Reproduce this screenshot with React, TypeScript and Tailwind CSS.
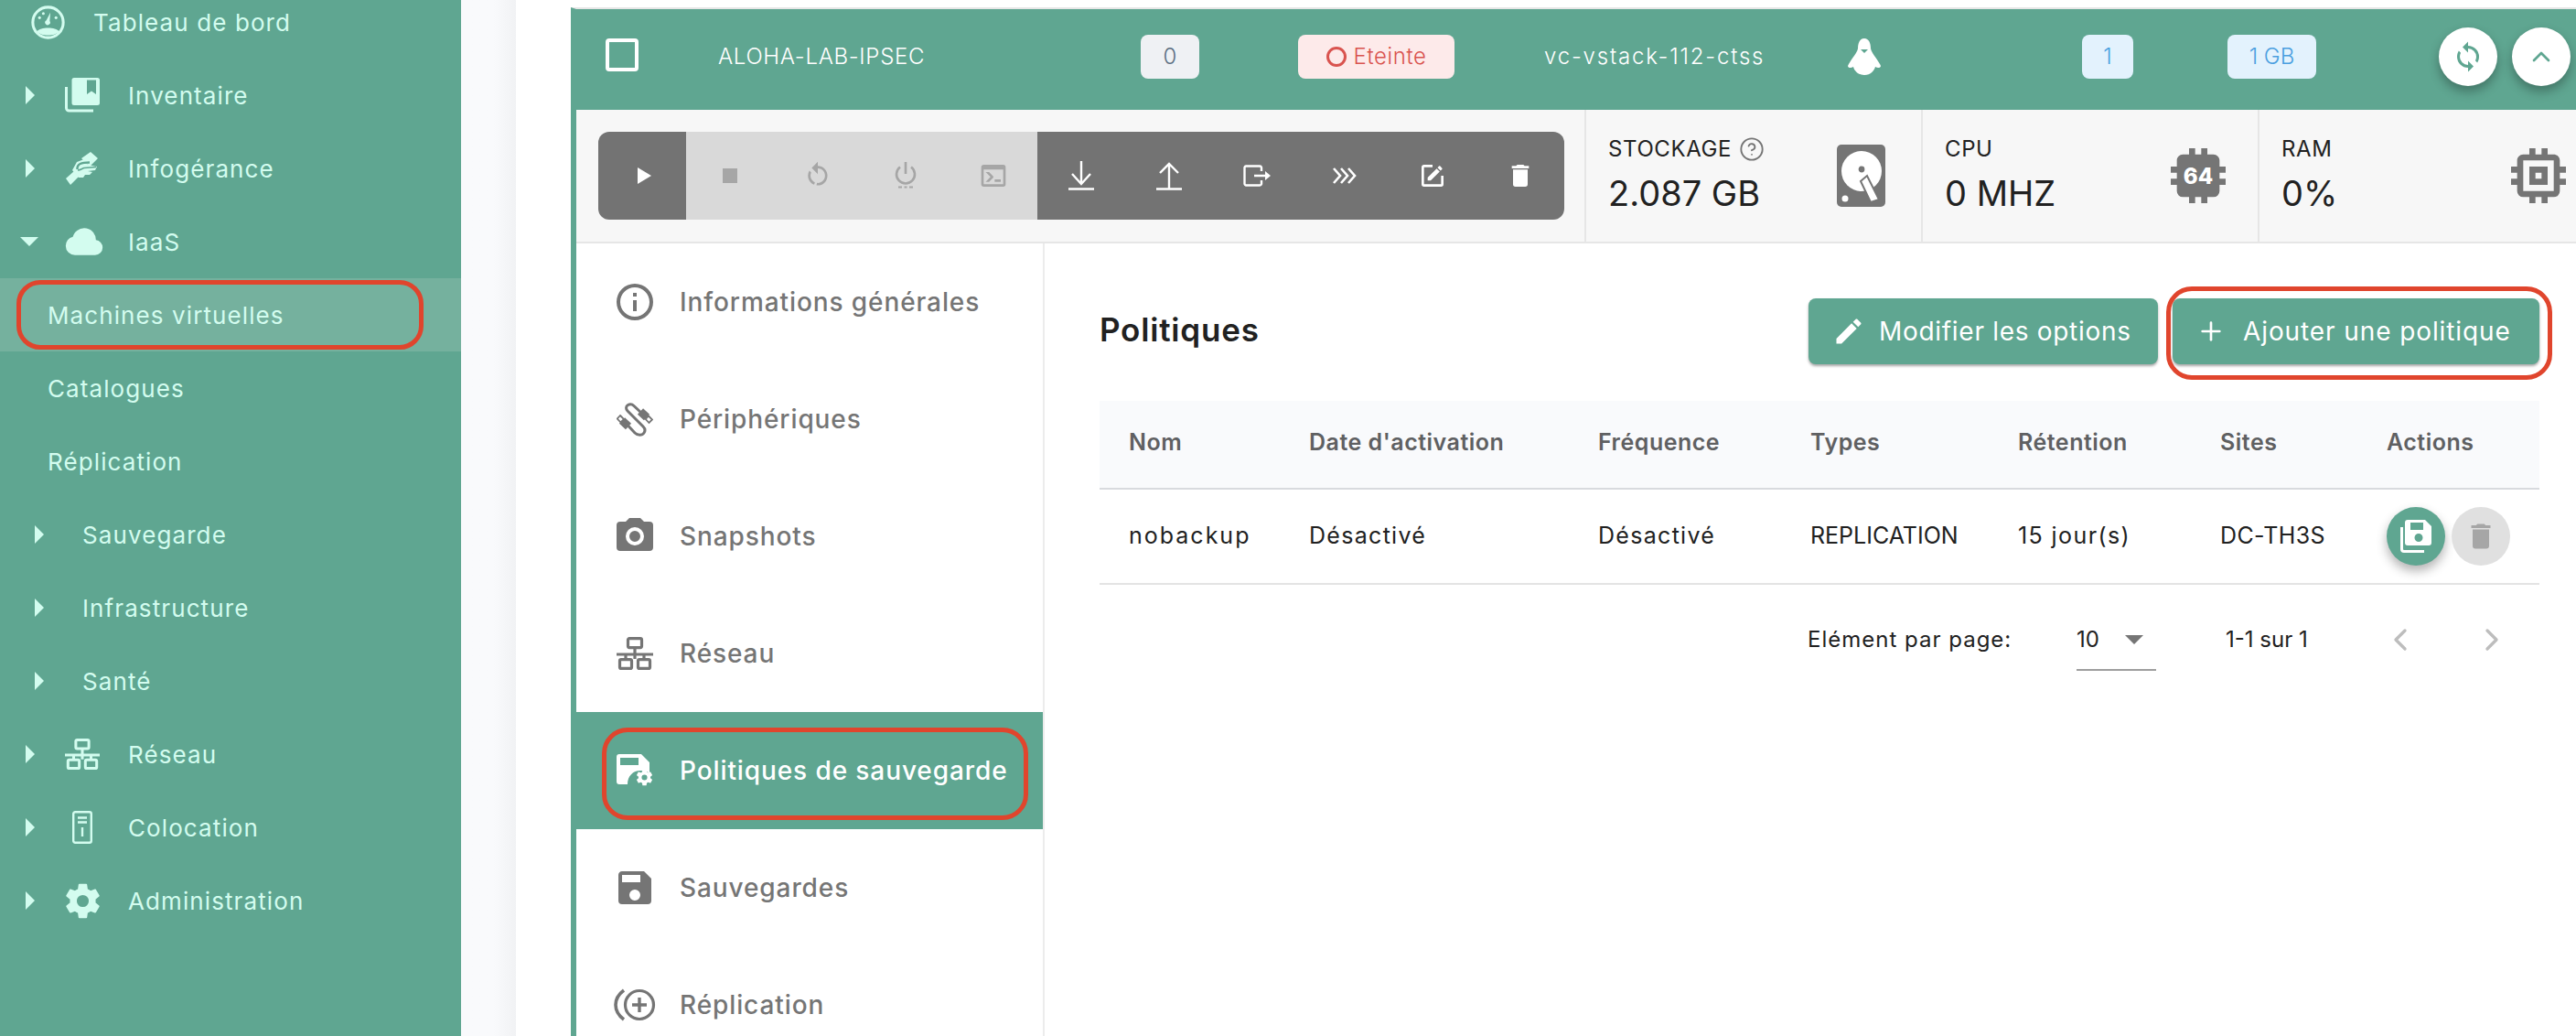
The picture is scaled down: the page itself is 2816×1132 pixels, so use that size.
import { ChevronLeft, ChevronRight, ChevronUp, CircleHelp, Plus } from 'lucide-react';
import type { ReactNode } from 'react';

const P = {
  save: 'M15,9H5V5H15M12,19A3,3 0 0,1 9,16A3,3 0 0,1 12,13A3,3 0 0,1 15,16A3,3 0 0,1 12,19M17,3H5C3.89,3 3,3.9 3,5V19A2,2 0 0,0 5,21H19A2,2 0 0,0 21,19V7L17,3Z',
  cog: 'M12,15.5A3.5,3.5 0 0,1 8.5,12A3.5,3.5 0 0,1 12,8.5A3.5,3.5 0 0,1 15.5,12A3.5,3.5 0 0,1 12,15.5M19.43,12.97C19.47,12.65 19.5,12.33 19.5,12C19.5,11.67 19.47,11.34 19.43,11L21.54,9.37C21.73,9.22 21.78,8.95 21.66,8.73L19.66,5.27C19.54,5.05 19.27,4.96 19.05,5.05L16.56,6.05C16.04,5.66 15.5,5.32 14.87,5.07L14.5,2.42C14.46,2.18 14.25,2 14,2H10C9.75,2 9.54,2.18 9.5,2.42L9.13,5.07C8.5,5.32 7.96,5.66 7.44,6.05L4.95,5.05C4.73,4.96 4.46,5.05 4.34,5.27L2.34,8.73C2.21,8.95 2.27,9.22 2.46,9.37L4.57,11C4.53,11.34 4.5,11.67 4.5,12C4.5,12.33 4.53,12.65 4.57,12.97L2.46,14.63C2.27,14.78 2.21,15.05 2.34,15.27L4.34,18.73C4.46,18.95 4.73,19.03 4.95,18.95L7.44,17.94C7.96,18.34 8.5,18.68 9.13,18.93L9.5,21.58C9.54,21.82 9.75,22 10,22H14C14.25,22 14.46,21.82 14.5,21.58L14.87,18.93C15.5,18.67 16.04,18.34 16.56,17.94L19.05,18.95C19.27,19.03 19.54,18.95 19.66,18.73L21.66,15.27C21.78,15.05 21.73,14.78 21.54,14.63L19.43,12.97Z',
  camera: 'M4,4H7L9,2H15L17,4H20A2,2 0 0,1 22,6V18A2,2 0 0,1 20,20H4A2,2 0 0,1 2,18V6A2,2 0 0,1 4,4M12,7A5,5 0 0,0 7,12A5,5 0 0,0 12,17A5,5 0 0,0 17,12A5,5 0 0,0 12,7M12,9A3,3 0 0,1 15,12A3,3 0 0,1 12,15A3,3 0 0,1 9,12A3,3 0 0,1 12,9Z',
  cloud: 'M6.5 20Q4.22 20 2.61 18.43 1 16.85 1 14.58 1 12.63 2.17 11.1 3.35 9.57 5.25 9.15 5.88 6.85 7.75 5.43 9.63 4 12 4 14.93 4 16.96 6.04 19 8.07 19 11 20.73 11.2 21.86 12.5 23 13.78 23 15.5 23 17.38 21.69 18.69 20.38 20 18.5 20Z',
  pencil: 'M20.71,7.04C21.1,6.65 21.1,6 20.71,5.63L18.37,3.29C18,2.9 17.35,2.9 16.96,3.29L15.12,5.12L18.87,8.87M3,17.25V21H6.75L17.81,9.93L14.06,6.18L3,17.25Z',
  trash: 'M19,4H15.5L14.5,3H9.5L8.5,4H5V6H19M6,19A2,2 0 0,0 8,21H16A2,2 0 0,0 18,19V7H6V19Z',
  sync: 'M12,18A6,6 0 0,1 6,12C6,11 6.25,10.03 6.7,9.2L5.24,7.74C4.46,8.97 4,10.43 4,12A8,8 0 0,0 12,20V23L16,19L12,15M12,4V1L8,5L12,9V6A6,6 0 0,1 18,12C18,13 17.75,13.97 17.3,14.8L18.76,16.26C19.54,15.03 20,13.57 20,12A8,8 0 0,0 12,4Z',
  restart: 'M12,4C14.1,4 16.1,4.8 17.6,6.3C20.7,9.4 20.7,14.5 17.6,17.6C15.8,19.5 13.3,20.2 10.9,19.9L11.4,17.9C13.1,18.1 14.9,17.5 16.2,16.2C18.5,13.9 18.5,10.1 16.2,7.7C15.1,6.6 13.5,6 12,6V10.6L7,5.6L12,0.6V4M6.3,17.6C3.7,15 3.3,11 5.1,7.9L6.6,9.4C5.5,11.6 5.9,14.4 7.8,16.2C8.3,16.7 8.9,17.1 9.6,17.4L9,19.4C8,19 7.1,18.4 6.3,17.6Z',
  console: 'M20,19V7H4V19H20M20,3A2,2 0 0,1 22,5V19A2,2 0 0,1 20,21H4A2,2 0 0,1 2,19V5C2,3.89 2.9,3 4,3H20M13,17V15H18V17H13M9.58,13L5.57,9H8.4L11.7,12.3C12.09,12.69 12.09,13.33 11.7,13.72L8.42,17H5.59L9.58,13Z',
  info: 'M11,9H13V7H11M12,20C7.59,20 4,16.41 4,12C4,7.59 7.59,4 12,4C16.41,4 20,7.59 20,12C20,16.41 16.41,20 12,20M12,2A10,10 0 0,0 2,12A10,10 0 0,0 12,22A10,10 0 0,0 22,12A10,10 0 0,0 12,2M11,17H13V11H11V17Z',
  edit: 'M5,3C3.89,3 3,3.89 3,5V19A2,2 0 0,0 5,21H19A2,2 0 0,0 21,19V12H19V19H5V5H12V3H5M17.78,4C17.61,4 17.43,4.07 17.3,4.2L16.08,5.41L18.58,7.91L19.8,6.7C20.06,6.44 20.06,6 19.8,5.75L18.25,4.2C18.12,4.07 17.95,4 17.78,4M15.37,6.12L8,13.5V16H10.5L17.87,8.62L15.37,6.12Z',
  memory: 'M17,17H7V7H17M21,11V9H19V7C19,5.89 18.1,5 17,5H15V3H13V5H11V3H9V5H7C5.89,5 5,5.89 5,7V9H3V11H5V13H3V15H5V17A2,2 0 0,0 7,19H9V21H11V19H13V21H15V19H17A2,2 0 0,0 19,17V15H21V13H19V11M13,13H11V11H13M15,9H9V15H15V9Z',
  chipBody: 'M21,11V9H19V7C19,5.89 18.1,5 17,5H15V3H13V5H11V3H9V5H7C5.89,5 5,5.89 5,7V9H3V11H5V13H3V15H5V17A2,2 0 0,0 7,19H9V21H11V19H13V21H15V19H17A2,2 0 0,0 19,17V15H21V13H19V11Z',
};

function Mdi({ d, className }: { d: string; className?: string }) {
  return (
    <svg viewBox="0 0 24 24" className={className} fill="currentColor">
      <path d={d} />
    </svg>
  );
}

function Gauge() {
  return (
    <svg viewBox="0 0 36 36" className="w-[37px] h-[37px]">
      <circle cx="18" cy="18" r="16.2" fill="none" stroke="currentColor" strokeWidth="3" />
      <path d="M6 27.5 C10 22.5 26 22.5 30 27.5 C26 33 10 33 6 27.5Z" fill="currentColor" />
      <path d="M20.5 7.5 L19.8 16.5 A2.7 2.7 0 1 1 16.2 15.7Z" fill="currentColor" />
      <circle cx="9" cy="13" r="1.5" fill="currentColor" />
      <circle cx="13" cy="8.5" r="1.5" fill="currentColor" />
      <circle cx="26.5" cy="13" r="1.5" fill="currentColor" />
    </svg>
  );
}

function BookStack() {
  return (
    <svg viewBox="0 0 38 38" className="w-[38px] h-[38px]">
      <path
        fillRule="evenodd"
        d="M10 0H35.5A2.5 2.5 0 0 1 38 2.5V27.5A2.5 2.5 0 0 1 35.5 30H10A2.5 2.5 0 0 1 7.5 27.5V2.5A2.5 2.5 0 0 1 10 0ZM24 2.5V18L29 14.5L34 18V2.5Z"
        fill="currentColor"
      />
      <path d="M1.5 10V33A3 3 0 0 0 4.5 36H31" fill="none" stroke="currentColor" strokeWidth="3" />
    </svg>
  );
}

function Handshake() {
  return (
    <svg viewBox="0 0 36 36" className="w-[36px] h-[36px]">
      <path d="M17 7L27 0L35 7L26 16Z M0 29L9 21L14 27L5 36Z" fill="currentColor" />
      <path
        d="M7 20L12 11L20 8L24 14L34 16L32 20L24 21L29 22L26 25L21 25L19 28L14 28Z"
        fill="currentColor"
      />
      <path d="M12.5 19C12 13 17 11.5 26 11.5" fill="none" stroke="#5fa691" strokeWidth="2.4" />
      <path d="M13 20C16 20 18 18 20 17.5L33 16.5" fill="none" stroke="#5fa691" strokeWidth="1.6" />
    </svg>
  );
}

function Network({ className }: { className?: string }) {
  return (
    <svg viewBox="0 0 40 36" className={className}>
      <g fill="none" stroke="currentColor" strokeWidth="3.2">
        <rect x="12.5" y="1.6" width="15" height="10" rx="1.5" />
        <rect x="3.5" y="24.6" width="13" height="9.8" rx="1.5" />
        <rect x="23.5" y="24.6" width="13" height="9.8" rx="1.5" />
        <path d="M20 12V24M0 19H40M10 19V24M30 19V24" />
      </g>
    </svg>
  );
}

function ServerRack() {
  return (
    <svg viewBox="0 0 22 36" className="w-[22px] h-[36px]">
      <rect x="1.2" y="1.2" width="19.6" height="33.6" rx="2" fill="none" stroke="currentColor" strokeWidth="2.4" />
      <path d="M6 7.5H16M6 12.5H16M11 18V28" fill="none" stroke="currentColor" strokeWidth="2.4" />
    </svg>
  );
}

function Usb() {
  return (
    <svg viewBox="0 0 40 37" className="w-[40px] h-[37px] text-[#757575]">
      <path
        d="M12.5 25L20 33C23 36 28 36 30 33C32 30 31 28 29 26L12 9C10 7 10 4 12.5 2.5C15 1 17 1.5 19 3.5L27 11"
        fill="none"
        stroke="currentColor"
        strokeWidth="3"
      />
      <path d="M6 19.5L13 26M26 9.5L33 16" fill="none" stroke="currentColor" strokeWidth="9" />
      <path d="M4 14L8 18L4.5 21.5L0.8 17.5Z M35 14.5L39 18.5L35.5 22L31.8 18Z" fill="#fff" stroke="currentColor" strokeWidth="1.8" />
    </svg>
  );
}

function SaveCog() {
  return (
    <svg viewBox="0 0 40 38" className="w-[40px] h-[38px] text-white">
      <path d="M27 1H3A3 3 0 0 0 0 4V31A3 3 0 0 0 3 34H12C12 25 18 19 26 19C30 19 34 20 36 22V10Z" fill="currentColor" />
      <rect x="4" y="5" width="20" height="8" fill="#5fa691" />
      <svg x="20" y="16" width="21" height="21" viewBox="0 0 24 24">
        <path d={P.cog} fill="currentColor" />
      </svg>
    </svg>
  );
}

function ReplicationIcon() {
  return (
    <svg viewBox="0 0 48 38" className="w-[50px] h-[38px] text-[#757575]">
      <path d="M12 3 C0 12 0 26 12 35" fill="none" stroke="currentColor" strokeWidth="3.6" />
      <circle cx="29" cy="19" r="15.5" fill="none" stroke="currentColor" strokeWidth="3.2" />
      <path d="M29 11V27M21 19H37" fill="none" stroke="currentColor" strokeWidth="3.4" />
    </svg>
  );
}

function Penguin() {
  return (
    <svg viewBox="0 0 42 40" className="w-[42px] h-[40px]">
      <path
        d="M21 0C26 0 28 5 28 11C29 16 34 21 38 28C41 32 36 33 33 31C32 35 28 40 21 40C14 40 10 35 9 31C6 33 1 32 4 28C8 21 13 16 14 11C14 5 16 0 21 0Z"
        fill="#fff"
      />
      <path d="M17 12H25L21 16Z" fill="#5fa691" />
    </svg>
  );
}

function Hdd() {
  return (
    <svg viewBox="0 0 53 68" className="w-[53px] h-[68px]">
      <rect width="53" height="68" rx="5" fill="#757575" />
      <circle cx="27" cy="29" r="22" fill="#fff" />
      <circle cx="27" cy="27" r="3.4" fill="#757575" />
      <path d="M26 40 L33 34 L46 60 L37 63Z" fill="#fff" stroke="#757575" strokeWidth="2" />
      <circle cx="9" cy="59" r="3.5" fill="#fff" />
    </svg>
  );
}

function Chip({ filled }: { filled?: boolean }) {
  return (
    <svg viewBox="3 3 18 18" className="w-[62px] h-[60px] text-[#757575]">
      <path d={filled ? P.chipBody : P.memory} fill="currentColor" />
      {filled && (
        <text x="12" y="14.6" textAnchor="middle" fontSize="7.2" fontWeight="800" fill="#fff" fontFamily="Inter, sans-serif">
          64
        </text>
      )}
    </svg>
  );
}

function Power() {
  return (
    <svg viewBox="0 0 24 32" className="w-[24px] h-[32px] text-[#a6a6a6]">
      <g fill="none" stroke="currentColor" strokeWidth="2.6">
        <path d="M12 1V14" />
        <path d="M6 6.5A10 10 0 1 0 18 6.5" />
        <path d="M4 28.5H8M10.5 28.5H13.5M16 28.5H20" strokeWidth="2" />
      </g>
    </svg>
  );
}

function Ring({ className }: { className: string }) {
  return <span className={`absolute pointer-events-none border-[5px] border-[#e0452d] ${className}`} />;
}

const Caret = () => <span className="w-0 h-0 border-y-[10px] border-y-transparent border-l-[10px] border-l-[#d3fcef]" />;

type SideItem = { label: string; icon?: ReactNode };

const sideItems: SideItem[] = [
  { label: 'Inventaire', icon: <BookStack /> },
  { label: 'Infogérance', icon: <Handshake /> },
];

const sideItemsLow: SideItem[] = [
  { label: 'Réseau', icon: <Network className="w-[38px] h-[36px]" /> },
  { label: 'Colocation', icon: <ServerRack /> },
  { label: 'Administration', icon: <Mdi d={P.cog} className="w-[45px] h-[45px]" /> },
];

function SideRow({ item }: { item: SideItem }) {
  return (
    <div className="h-20 flex items-center">
      <span className="w-[28px]" />
      <span className="w-[34px] flex">
        <Caret />
      </span>
      <span className="w-[56px] flex justify-center">{item.icon}</span>
      <span className="ml-[22px]">{item.label}</span>
    </div>
  );
}

function Sidebar() {
  return (
    <aside className="w-[504px] shrink-0 bg-[#5fa691] text-[#d3fcef] text-[26px] tracking-[1.1px] -mt-4 h-[1148px]">
      <div className="h-20 flex items-center">
        <span className="w-[34px]" />
        <Gauge />
        <span className="ml-[31px]">Tableau de bord</span>
      </div>
      {sideItems.map((i) => (
        <SideRow key={i.label} item={i} />
      ))}
      <div className="h-20 flex items-center">
        <span className="w-[22px]" />
        <span className="w-0 h-0 border-x-[10px] border-x-transparent border-t-[10px] border-t-[#d3fcef]" />
        <span className="w-[28px]" />
        <Mdi d={P.cloud} className="w-[44px] h-[44px]" />
        <span className="ml-[26px]">IaaS</span>
      </div>
      <div className="relative h-20 flex items-center pl-[52px] bg-[#75b19e]">
        Machines virtuelles
        <Ring className="left-[18px] top-[2px] w-[445px] h-[76px] rounded-[26px]" />
      </div>
      <div className="h-20 flex items-center pl-[52px]">Catalogues</div>
      <div className="h-20 flex items-center pl-[52px]">Réplication</div>
      {['Sauvegarde', 'Infrastructure', 'Santé'].map((l) => (
        <div key={l} className="h-20 flex items-center pl-[38px]">
          <span className="w-[52px] flex">
            <Caret />
          </span>
          {l}
        </div>
      ))}
      {sideItemsLow.map((i) => (
        <SideRow key={i.label} item={i} />
      ))}
    </aside>
  );
}

function Badge({ className, children }: { className: string; children: ReactNode }) {
  return <span className={`h-12 rounded-lg flex items-center justify-center text-[24px] ${className}`}>{children}</span>;
}

function CircleBtn({ children, className }: { children: ReactNode; className?: string }) {
  return (
    <span className={`w-16 h-16 rounded-full bg-white flex items-center justify-center shadow-[0_6px_12px_rgba(0,0,0,0.3)] ${className ?? ''}`}>
      {children}
    </span>
  );
}

function VmHeader() {
  return (
    <div className="h-[110px] pb-[6px] bg-[#5fa691] flex items-center pl-[38px] text-white text-[24px] font-light">
      <span className="w-9 h-9 mb-1 border-[4px] border-white rounded-[4px]" />
      <span className="ml-[87px] w-[462px] tracking-[0.7px]">ALOHA-LAB-IPSEC</span>
      <Badge className="w-16 bg-[#eff1f4] text-[#5c6f82]">0</Badge>
      <Badge className="ml-[108px] w-[171px] bg-[#fdeaea] text-[#d9534f] gap-2 tracking-[0.6px]">
        <span className="w-[22px] h-[22px] rounded-full border-[3px] border-[#d9534f]" />
        Eteinte
      </Badge>
      <span className="ml-[98px] w-[329px] tracking-[1.8px]">vc-vstack-112-ctss</span>
      <Penguin />
      <Badge className="ml-[217px] w-14 bg-[#e3f2fd] text-[#4a9fe0]">1</Badge>
      <Badge className="ml-[103px] w-[97px] bg-[#e3f2fd] text-[#4a9fe0]">1 GB</Badge>
      <CircleBtn className="ml-[134px] text-[#5fa691]">
        <Mdi d={P.sync} className="w-9 h-9" />
      </CircleBtn>
      <CircleBtn className="ml-4 text-[#5fa691]">
        <ChevronUp className="w-8 h-8" strokeWidth={2} />
      </CircleBtn>
    </div>
  );
}

function ToolCell({ children, disabled }: { children: ReactNode; disabled?: boolean }) {
  return (
    <span className={`w-24 h-24 flex items-center justify-center ${disabled ? 'bg-[#d9d9d9] text-[#a6a6a6]' : 'text-white'}`}>
      {children}
    </span>
  );
}

function ArrowBar({ up }: { up?: boolean }) {
  return (
    <svg viewBox="0 0 28 32" className="w-[28px] h-[32px]">
      <g fill="none" stroke="currentColor" strokeWidth="2.4">
        <path d="M0 30.5H28" />
        {up ? <path d="M14 30V3M4 13L14 3L24 13" /> : <path d="M14 0V25M4 14L14 25L24 14" />}
      </g>
    </svg>
  );
}

function Toolbar() {
  return (
    <div className="w-[1056px] h-24 ml-6 rounded-xl overflow-hidden bg-[#737373] flex">
      <ToolCell>
        <span className="w-0 h-0 ml-1 border-y-[9px] border-y-transparent border-l-[15px] border-l-white" />
      </ToolCell>
      <ToolCell disabled>
        <span className="w-4 h-4 bg-[#a6a6a6]" />
      </ToolCell>
      <ToolCell disabled>
        <Mdi d={P.restart} className="w-8 h-8" />
      </ToolCell>
      <ToolCell disabled>
        <Power />
      </ToolCell>
      <ToolCell disabled>
        <Mdi d={P.console} className="w-8 h-8" />
      </ToolCell>
      <ToolCell>
        <ArrowBar />
      </ToolCell>
      <ToolCell>
        <ArrowBar up />
      </ToolCell>
      <ToolCell>
        <svg viewBox="0 0 30 24" className="w-[30px] h-[24px]">
          <path d="M20 7V3A2 2 0 0 0 18 1.5H3A2 2 0 0 0 1.5 3V21A2 2 0 0 0 3 22.5H18A2 2 0 0 0 20 21V17" fill="none" stroke="currentColor" strokeWidth="2.4" />
          <path d="M12 12H25" fill="none" stroke="currentColor" strokeWidth="2.4" />
          <path d="M24 7L30 12L24 17Z" fill="currentColor" />
        </svg>
      </ToolCell>
      <ToolCell>
        <svg viewBox="0 0 26 18" className="w-[26px] h-[18px]">
          <path d="M1 1L8 9L1 17M9 1L16 9L9 17M17 1L24 9L17 17" fill="none" stroke="currentColor" strokeWidth="2.6" />
        </svg>
      </ToolCell>
      <ToolCell>
        <Mdi d={P.edit} className="w-8 h-8" />
      </ToolCell>
      <ToolCell>
        <Mdi d={P.trash} className="w-8 h-8" />
      </ToolCell>
    </div>
  );
}

function Stat({ label, value, icon, help, className }: { label: string; value: string; icon: ReactNode; help?: boolean; className: string }) {
  return (
    <div className={`h-full border-l-2 border-[#e6e6e6] flex items-center justify-between pl-6 ${className}`}>
      <div className="text-[#212121] pb-[5px]">
        <div className="flex items-center gap-2 text-[24px] tracking-[0.6px] leading-[30px] mb-[12px]">
          {label}
          {help && <CircleHelp className="w-[28px] h-[28px] text-[#757575]" strokeWidth={1.6} />}
        </div>
        <div className="text-[38px] leading-[42px]">{value}</div>
      </div>
      {icon}
    </div>
  );
}

function StatsRow() {
  return (
    <div className="h-[146px] bg-[#f7f7f7] border-b-2 border-[#e6e6e6] flex items-center">
      <Toolbar />
      <div className="ml-[22px] flex-1 flex h-full">
        <Stat label="STOCKAGE" value="2.087 GB" help icon={<Hdd />} className="w-[368px] pr-[39px]" />
        <Stat label="CPU" value="0 MHZ" icon={<Chip filled />} className="w-[368px] pr-[34px]" />
        <Stat label="RAM" value="0%" icon={<Chip />} className="flex-1 pr-[10px]" />
      </div>
    </div>
  );
}

const gray = 'text-[#757575]';

const navItems: { label: string; icon: ReactNode; active?: boolean }[] = [
  { label: 'Informations générales', icon: <Mdi d={P.info} className={`w-12 h-12 ${gray}`} /> },
  { label: 'Périphériques', icon: <Usb /> },
  { label: 'Snapshots', icon: <Mdi d={P.camera} className={`w-12 h-12 ${gray}`} /> },
  { label: 'Réseau', icon: <Network className={`w-[40px] h-[40px] ${gray}`} /> },
  { label: 'Politiques de sauvegarde', icon: <SaveCog />, active: true },
  { label: 'Sauvegardes', icon: <Mdi d={P.save} className={`w-12 h-12 ${gray}`} /> },
  { label: 'Réplication', icon: <ReplicationIcon /> },
];

function SideNav() {
  return (
    <nav className="w-[512px] shrink-0 border-r-2 border-[#ececec] text-[28px] font-medium tracking-[0.9px]">
      {navItems.map((n) => (
        <div key={n.label} className={`relative h-32 flex items-center ${n.active ? 'bg-[#5fa691] text-white' : 'text-[#757575]'}`}>
          <span className="w-[128px] flex justify-center mr-[-15px]">{n.icon}</span>
          {n.label}
          {n.active && <Ring className="left-[28px] top-[17px] w-[466px] h-[101px] rounded-[28px]" />}
        </div>
      ))}
    </nav>
  );
}

function ActionButton({ icon, label, className }: { icon: ReactNode; label: string; className: string }) {
  return (
    <button className={`h-[72px] rounded-lg bg-[#5fa691] text-white text-[28px] flex items-center shadow-[0_2px_3px_rgba(0,0,0,0.35)] ${className}`}>
      {icon}
      {label}
    </button>
  );
}

const headers = ['Nom', "Date d'activation", 'Fréquence', 'Types', 'Rétention', 'Sites', 'Actions'];
const cells = [
  { text: 'nobackup', className: 'pl-8 tracking-[2px]' },
  { text: 'Désactivé', className: 'tracking-[1.3px]' },
  { text: 'Désactivé', className: 'tracking-[1.3px]' },
  { text: 'REPLICATION', className: '' },
  { text: '15 jour(s)', className: 'tracking-[1.4px]' },
  { text: 'DC-TH3S', className: 'tracking-[0.4px]' },
];

function Policies() {
  return (
    <section className="flex-1 pl-[60px] pr-[40px] pt-[60px]">
      <div className="flex items-center h-[72px]">
        <h2 className="text-[35px] tracking-[0.8px] font-semibold text-[#212121] pb-[3px]">Politiques</h2>
        <ActionButton
          className="ml-auto w-[382px] pl-[26px] gap-[15px] tracking-[0.7px]"
          icon={<Mdi d={P.pencil} className="w-9 h-9" />}
          label="Modifier les options"
        />
        <div className="relative ml-4">
          <ActionButton
            className="w-[401px] pl-[26px] gap-[19px] tracking-[0.9px]"
            icon={<Plus className="w-8 h-8" strokeWidth={2} />}
            label="Ajouter une politique"
          />
          <Ring className="-left-[7px] -top-[13px] w-[422px] h-[102px] rounded-[28px]" />
        </div>
      </div>

      <table className="mt-10 w-[1574px] table-fixed border-collapse">
        <colgroup>
          <col className="w-[229px]" />
          <col className="w-[316px]" />
          <col className="w-[232px]" />
          <col className="w-[227px]" />
          <col className="w-[221px]" />
          <col className="w-[182px]" />
          <col className="w-[167px]" />
        </colgroup>
        <thead>
          <tr className="h-24 bg-[#f9fafc] border-b-2 border-[#d8dade]">
            {headers.map((h, i) => (
              <th key={h} className={`text-left text-[25px] tracking-[0.5px] pb-[3px] font-semibold text-[#5f6062] ${i === 0 ? 'pl-8' : ''}`}>
                {h}
              </th>
            ))}
          </tr>
        </thead>
        <tbody>
          <tr className="h-[104px] border-b-2 border-[#e3e3e3]">
            {cells.map((c, i) => (
              <td key={i} className={`text-[25px] text-[#212121] ${c.className}`}>
                {c.text}
              </td>
            ))}
            <td>
              <div className="flex gap-[7px]">
                <span className="w-16 h-16 rounded-full bg-[#5fa691] text-white flex items-center justify-center shadow-[0_6px_12px_rgba(0,0,0,0.3)]">
                  <svg viewBox="0 0 34 36" className="w-[34px] h-[36px]">
                    <path
                      fillRule="evenodd"
                      d="M8 0H27L34 7V25A3 3 0 0 1 31 28H8A3 3 0 0 1 5 25V3A3 3 0 0 1 8 0ZM11 3V11H25V3ZM20 15A4.5 4.5 0 1 0 20 24A4.5 4.5 0 1 0 20 15Z"
                      fill="currentColor"
                    />
                    <path d="M1.5 8V32A2.5 2.5 0 0 0 4 34.5H26" fill="none" stroke="currentColor" strokeWidth="3" />
                  </svg>
                </span>
                <span className="w-16 h-16 rounded-full bg-[#e0e0e0] text-[#a6a6a6] flex items-center justify-center">
                  <Mdi d={P.trash} className="w-9 h-9" />
                </span>
              </div>
            </td>
          </tr>
        </tbody>
      </table>

      <div className="h-[120px] flex items-center text-[#212121] text-[24px] pl-[774px]">
        <span className="w-[294px] tracking-[1px]">Elément par page:</span>
        <span className="w-[87px] h-[66px] mt-[2px] border-b-2 border-[#9e9e9e] flex items-center justify-between pr-[14px]">
          10
          <span className="w-0 h-0 border-x-[10px] border-x-transparent border-t-[10px] border-t-[#757575]" />
        </span>
        <span className="ml-[76px] w-[158px]">1-1 sur 1</span>
        <ChevronLeft className="w-[40px] h-[40px] text-[#bdbdbd] ml-[13px]" strokeWidth={2} />
        <ChevronRight className="w-[40px] h-[40px] text-[#bdbdbd] ml-[60px]" strokeWidth={2} />
      </div>
    </section>
  );
}

export default function App() {
  return (
    <div className="w-[2816px] h-[1132px] overflow-hidden flex bg-white font-['Inter',sans-serif]">
      <Sidebar />
      <div className="w-[60px] shrink-0 bg-linear-to-r from-[#f9fafc] from-60% to-[#f1f2f4]" />
      <main className="flex-1 min-w-0 pl-[60px] pt-2">
        <div className="border-t-2 border-[#e6e6e6] border-l-[6px] border-l-[#5fa691]">
          <div className="-ml-[6px]">
            <VmHeader />
          </div>
          <StatsRow />
          <div className="flex h-[900px]">
            <SideNav />
            <Policies />
          </div>
        </div>
      </main>
    </div>
  );
}
